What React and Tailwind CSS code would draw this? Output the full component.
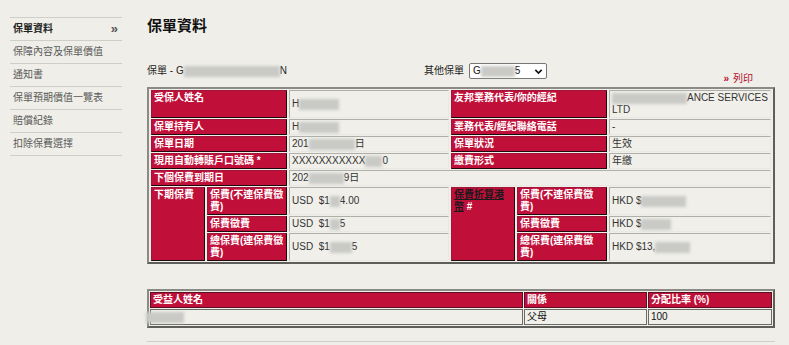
import React from 'react';

const font = { fontFamily: '"Liberation Sans", "Noto Sans CJK TC", sans-serif' };

// blurred-out private data
function Blur({ className = '' }) {
  return <span className={`inline-block align-middle h-[11px] bg-[#c9c9c6] blur-[1.5px] ${className}`} />;
}

const menu = ['保單資料', '保障內容及保單價值', '通知書', '保單預期價值一覽表', '賠償紀錄', '扣除保費選擇'];

const L = 'bg-[#c0103a] text-white font-bold align-top text-left px-[2px] py-[1px] border border-t-[#a0153a] border-l-[#a0153a] border-b-[#1c0a0e] border-r-[#1c0a0e]';
const V = 'bg-[#f0efea] text-[#333] align-middle text-left px-[2px] py-[1px] border border-[#b0b0ab] border-b-[#e8e8e4] border-r-[#e8e8e4]';
const H = 'bg-[#c0103a] text-white font-bold text-left px-[2px] py-[1px] border border-[#5a1020]';
const B = 'bg-[#f0efea] text-[#111] px-[2px] py-[1px] border border-[#6a6a66]';

function App() {
  return (
    <div className="w-[789px] h-[345px] bg-[#efeee8] flex text-[10px] leading-[12px] overflow-hidden" style={font}>
      {/* Sidebar */}
      <div className="w-[112px] ml-[10px] pt-[17px] shrink-0">
        <ul className="border-b border-[#cfcfca]">
          {menu.map((m, i) => (
            <li key={m} className="h-[23px] border-t border-[#cfcfca] flex items-center pl-[3px] pr-[4px]">
              <span className={i === 0 ? 'font-bold text-[#222]' : 'text-[#5a5a5a]'}>{m}</span>
              {i === 0 && <span className="ml-auto font-bold text-[13px] text-[#555]">»</span>}
            </li>
          ))}
        </ul>
      </div>

      {/* Main */}
      <div className="ml-[25px] w-[628px] pt-[17px]">
        <h1 className="text-[15px] leading-[18px] font-bold text-[#111]">保單資料</h1>

        <div className="mt-[27px] flex h-[25px]">
          <div className="flex items-center h-[18px] text-[#222]">
            <span className="w-[277px] flex items-center">
              保單 - G<Blur className="w-[96px]" />N
            </span>
            <span>其他保單</span>
            <div className="ml-[5px] w-[78px] h-[16px] bg-white border border-[#767676] rounded-[2px] flex items-center pl-[3px] pr-[3px] text-[#111]">
              G<Blur className="w-[34px]" />5
              <svg className="ml-auto" width="9" height="9" viewBox="0 0 10 10">
                <path d="M1.5 3.2 L5 6.8 L8.5 3.2" fill="none" stroke="#111" strokeWidth="1.8" />
              </svg>
            </div>
          </div>
          <div className="ml-auto self-end pb-[2px] mr-[22px] text-[#b3102f] flex items-center">
            <span className="font-bold mr-[4px]">»</span>列印
          </div>
        </div>

        <table className="w-[628px] table-fixed border-separate border-spacing-x-[2px] border-spacing-y-[1px] border-2 border-[#8a8a86] border-r-[#5e5e5a] border-b-[#5e5e5a]">
          <colgroup>
            <col className="w-[54px]" />
            <col className="w-[80px]" />
            <col className="w-[160px]" />
            <col className="w-[64px]" />
            <col className="w-[90px]" />
            <col className="w-[162px]" />
          </colgroup>
          <tbody>
            <tr>
              <td colSpan={2} className={L}>受保人姓名</td>
              <td className={V}>H<Blur className="w-[40px]" /></td>
              <td colSpan={2} className={L}>友邦業務代表/你的經紀</td>
              <td className={V}>
                <Blur className="w-[75px]" />ANCE SERVICES<br />LTD
              </td>
            </tr>
            <tr>
              <td colSpan={2} className={L}>保單持有人</td>
              <td className={V}>H<Blur className="w-[40px]" /></td>
              <td colSpan={2} className={L}>業務代表/經紀聯絡電話</td>
              <td className={V}>-</td>
            </tr>
            <tr>
              <td colSpan={2} className={L}>保單日期</td>
              <td className={V}>201<Blur className="w-[46px]" />日</td>
              <td colSpan={2} className={L}>保單狀況</td>
              <td className={V}>生效</td>
            </tr>
            <tr>
              <td colSpan={2} className={L}>現用自動轉賬戶口號碼 *</td>
              <td className={V}>XXXXXXXXXXX<Blur className="w-[17px]" />0</td>
              <td colSpan={2} className={L}>繳費形式</td>
              <td className={V}>年繳</td>
            </tr>
            <tr>
              <td colSpan={2} className={L}>下個保費到期日</td>
              <td colSpan={4} className={V}>202<Blur className="w-[35px]" />9日</td>
            </tr>
            <tr>
              <td rowSpan={3} className={L}>下期保費</td>
              <td className={L}>保費(不連保費徵費)</td>
              <td className={V}>USD&nbsp; $1<Blur className="w-[10px]" />4.00</td>
              <td rowSpan={3} className={L}>
                <span className="underline text-[#1a1a1a]">保費折算港<br />幣</span> #
              </td>
              <td className={L}>保費(不連保費徵費)</td>
              <td className={V}>HKD $<Blur className="w-[45px]" /></td>
            </tr>
            <tr>
              <td className={L}>保費徵費</td>
              <td className={V}>USD&nbsp; $1<Blur className="w-[10px]" />5</td>
              <td className={L}>保費徵費</td>
              <td className={V}>HKD $<Blur className="w-[30px]" /></td>
            </tr>
            <tr>
              <td className={L}>總保費(連保費徵費)</td>
              <td className={V}>USD&nbsp; $1<Blur className="w-[22px]" />5</td>
              <td className={L}>總保費(連保費徵費)</td>
              <td className={V}>HKD $13,<Blur className="w-[35px]" /></td>
            </tr>
          </tbody>
        </table>

        <table className="mt-[25px] w-[628px] table-fixed border-separate border-spacing-[1px] border-2 border-[#8a8a86] border-r-[#5e5e5a] border-b-[#5e5e5a]">
          <colgroup>
            <col className="w-[373px]" />
            <col className="w-[123px]" />
            <col className="w-[124px]" />
          </colgroup>
          <thead>
            <tr>
              <th className={H}>受益人姓名</th>
              <th className={H}>關係</th>
              <th className={H}>分配比率 (%)</th>
            </tr>
          </thead>
          <tbody>
            <tr>
              <td className={B}><Blur className="w-[38px] -ml-[7px]" /></td>
              <td className={B}>父母</td>
              <td className={B}>100</td>
            </tr>
          </tbody>
        </table>

        <div className="mt-[13px] border-t border-[#cfcfca]" />
      </div>
    </div>
  );
}

export default App;
